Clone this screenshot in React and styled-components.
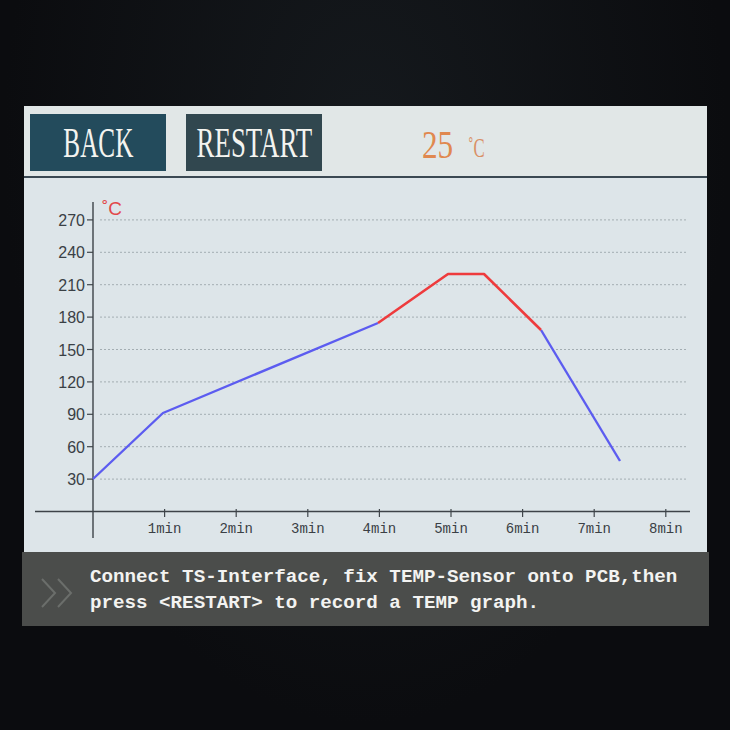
import React from "react";
import styled, { createGlobalStyle } from "styled-components";

const GlobalStyle = createGlobalStyle`
    html, body {
        margin: 0;
        padding: 0;
        background: #0d0f12;
    }
    body {
        width: 730px;
        height: 730px;
        overflow: hidden;
        font-family: "Liberation Sans", Arial, sans-serif;
    }
`;

const Bezel = styled.div`
    width: 730px;
    height: 730px;
    box-sizing: border-box;
    padding: 106px 23px 0 24px;
    background: radial-gradient(ellipse at 50% 20%, #15191d 0%, #0b0c0f 70%);
`;

const Screen = styled.div`
    width: 683px;
    height: 520px;
    display: flex;
    flex-direction: column;
    background: #dde5e9;
`;

const Header = styled.div`
    height: 72px;
    display: flex;
    align-items: flex-start;
    padding: 8px 0 0 6px;
    box-sizing: border-box;
    gap: 20px;
    background: #e1e7e7;
    border-bottom: solid 2px #3b4953;
    flex-shrink: 0;
`;

const Button = styled.div`
    width: 136px;
    height: 57px;
    display: flex;
    align-items: center;
    justify-content: center;
    background: ${(p) => p.bg};
    color: #f4f4f0;
    overflow: hidden;
`;

const Condensed = styled.span`
    display: inline-block;
    font-family: "Liberation Serif", "Times New Roman", serif;
    font-size: ${(p) => p.size}px;
    line-height: 1;
    transform: scaleX(${(p) => p.sx});
    transform-origin: ${(p) => p.origin || "center"};
    white-space: nowrap;
`;

const Temp = styled.div`
    margin-left: 80px;
    height: 57px;
    display: flex;
    align-items: center;
    color: #e0884f;
    padding-top: 2px;
`;

const TempUnit = styled.span`
    display: inline-block;
    font-family: "Liberation Serif", "Times New Roman", serif;
    font-size: 27px;
    margin-left: 6px;
    margin-top: 8px;
    transform: scaleX(0.62);
    transform-origin: left;
    color: #d99066;
`;

const ChartArea = styled.div`
    height: 374px;
    flex-shrink: 0;
    background: #dde5e9;
`;

const Footer = styled.div`
    flex: 1;
    display: flex;
    align-items: center;
    background: #4b4d4b;
    margin: 0 -2px;
    padding-left: 18px;
`;

const Chevrons = styled.svg`
    width: 34px;
    height: 32px;
    flex-shrink: 0;
    margin-top: 8px;
`;

const Message = styled.div`
    margin-left: 16px;
    font-family: "Liberation Mono", "Courier New", monospace;
    font-weight: 700;
    font-size: 19.2px;
    line-height: 26px;
    color: #f3f3f1;
    white-space: pre;
    padding-top: 2px;
`;

const yOf = (v) => 511.5 - (v * 32.4) / 30;
const xOf = (m) => 93 + m * 71.6;

const yTicks = [30, 60, 90, 120, 150, 180, 210, 240, 270];
const xTicks = [1, 2, 3, 4, 5, 6, 7, 8];

const blue1 = [[93, 479], [163, 413], [378, 323]];
const red = [[378, 323], [448, 274], [484, 274], [541, 330]];
const blue2 = [[541, 330], [620, 461]];

const pts = (arr) => arr.map((p) => p.join(",")).join(" ");

const Chart = () => (
    <svg width="683" height="374" viewBox="24 178 683 374">
        {yTicks.map((v) => (
            <g key={v}>
                <line x1="100" x2="688" y1={yOf(v)} y2={yOf(v)} stroke="#a3adb2" strokeWidth="1" strokeDasharray="2 2" />
                <line x1="87" x2="93" y1={yOf(v)} y2={yOf(v)} stroke="#40464b" strokeWidth="1.2" />
                <text x="85" y={yOf(v) + 6} textAnchor="end" fontFamily="Liberation Sans, Arial, sans-serif" fontSize="16" fill="#3a4045">
                    {v}
                </text>
            </g>
        ))}
        {xTicks.map((m) => (
            <g key={m}>
                <line x1={xOf(m)} x2={xOf(m)} y1="509" y2="517" stroke="#40464b" strokeWidth="1.2" />
                <text x={xOf(m)} y="533" textAnchor="middle" fontFamily="Liberation Mono, Courier New, monospace" fontSize="14" fill="#3a4045">
                    {m}min
                </text>
            </g>
        ))}
        <line x1="93" x2="93" y1="202" y2="538" stroke="#3d4348" strokeWidth="1.4" />
        <line x1="35" x2="690" y1="511.5" y2="511.5" stroke="#3d4348" strokeWidth="1.6" />
        <text x="102" y="215" fontFamily="Liberation Sans, Arial, sans-serif" fontSize="19" fill="#e2484a">
            ˚C
        </text>
        <polyline points={pts(blue1)} fill="none" stroke="#5c5cf0" strokeWidth="2.4" strokeLinejoin="round" />
        <polyline points={pts(blue2)} fill="none" stroke="#5c5cf0" strokeWidth="2.4" strokeLinejoin="round" />
        <polyline points={pts(red)} fill="none" stroke="#ee3b3d" strokeWidth="2.6" strokeLinejoin="round" />
    </svg>
);

const App = () => {
    return (
        <>
            <GlobalStyle />
            <Bezel>
                <Screen>
                    <Header>
                        <Button bg="#234b5c">
                            <Condensed size={42} sx={0.6}>BACK</Condensed>
                        </Button>
                        <Button bg="#31474f">
                            <Condensed size={42} sx={0.64}>RESTART</Condensed>
                        </Button>
                        <Temp>
                            <Condensed size={40} sx={0.78} origin="left">25</Condensed>
                            <TempUnit>˚C</TempUnit>
                        </Temp>
                    </Header>
                    <ChartArea>
                        <Chart />
                    </ChartArea>
                    <Footer>
                        <Chevrons viewBox="0 0 34 32">
                            <polyline points="2,2 15,16 2,30" fill="none" stroke="#6b6e6b" strokeWidth="2" />
                            <polyline points="18,2 31,16 18,30" fill="none" stroke="#6b6e6b" strokeWidth="2" />
                        </Chevrons>
                        <Message>
                            {"Connect TS-Interface, fix TEMP-Sensor onto PCB,then\npress <RESTART> to record a TEMP graph."}
                        </Message>
                    </Footer>
                </Screen>
            </Bezel>
        </>
    );
};

export default App;
